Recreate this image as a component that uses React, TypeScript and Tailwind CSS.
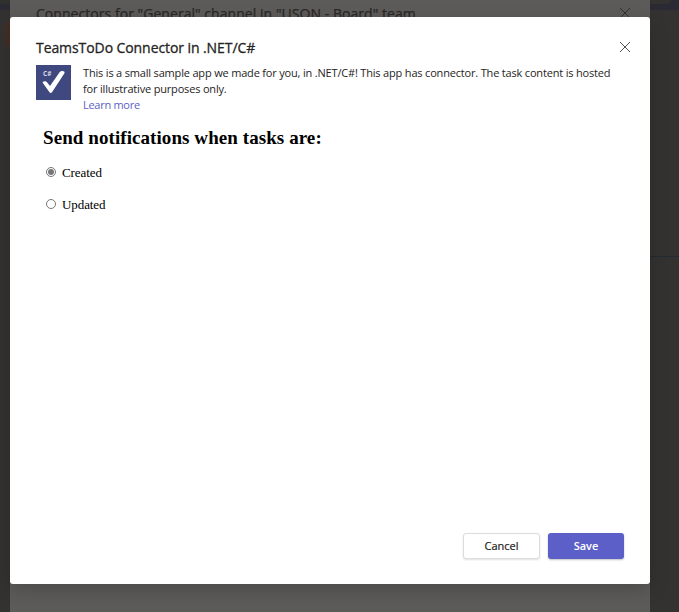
import { useState } from "react";

function CloseIcon({ className }: { className: string }) {
  return (
    <svg viewBox="0 0 12 12" className={className} fill="none" stroke="currentColor" strokeWidth="1">
      <path d="M1 1 11 11M11 1 1 11" />
    </svg>
  );
}

function AppLogo() {
  return (
    <svg viewBox="0 0 35 35" className="size-[35px] shrink-0">
      <rect width="35" height="35" fill="#40497f" />
      <text x="7" y="11" fill="#d5d8ea" fontSize="6.5" fontWeight="700" fontFamily="Open Sans, sans-serif">C#</text>
      <path d="M6.500 17.600c1.100-1.400 3.400-1.700 4.500-.4l3 3.900L23.600 7.300c1.100-1.500 3.200-1.800 4.500-.8.700.6.600 1.500 0 2.300L16 27.300c-.7 1-1.900 1-2.500 0z" fill="#fff" />
    </svg>
  );
}

function Option({ label, checked, onSelect }: { label: string; checked: boolean; onSelect: () => void }) {
  return (
    <label className="flex h-8 items-center font-['Liberation_Serif',serif] text-[13px] tracking-[-0.08px] text-black">
      <input type="radio" name="event" className="sr-only" checked={checked} onChange={onSelect} />
      <span className="-mt-0.5 mr-1.5 flex size-[10px] items-center justify-center rounded-full border border-[#767676]">
        {checked && <span className="size-[6px] rounded-full bg-[#767676]" />}
      </span>
      <span className="-mt-px">{label}</span>
    </label>
  );
}

function Backdrop() {
  return (
    <div className="flex h-full w-full">
      <div className="flex w-[10px] flex-col bg-[#333230]">
        <div className="h-1 bg-[#30302f]" />
        <div className="h-[6px] bg-[#292a33]" />
        <div className="mt-3 ml-[5px] h-[25px] rounded-l bg-[#442e25]" />
      </div>
      <div className="flex w-[640px] items-start justify-between bg-[#5d5b59] pt-1 pr-[19px] pl-[26px]">
        <div className="font-['Open_Sans',sans-serif] text-[14px] leading-5 tracking-[0.045px] whitespace-nowrap text-[#292827] [-webkit-text-stroke:0.25px]">
          Connectors for "General" channel in "USON - Board" team
        </div>
        <CloseIcon className="mt-[3px] size-3 text-[#30302f]" />
      </div>
      <div className="flex w-[29px] flex-col bg-[#333230]">
        <div className="h-[10px] bg-[#292a33]">
          <div className="h-1 w-[21px] rounded-br-sm bg-[#333230]" />
        </div>
        <div className="mt-[246px] h-px bg-[#222b33]" />
      </div>
    </div>
  );
}

export default function App() {
  const [event, setEvent] = useState("Created");
  return (
    <div className="relative h-[612px] w-[679px] overflow-hidden">
      <Backdrop />
      <div className="absolute top-[17px] left-[10px] flex h-[567px] w-[640px] flex-col rounded-[3px] bg-white px-[26px] pt-[21px] pb-[25px] font-['Open_Sans',sans-serif] text-[#252423] shadow-[0_6px_18px_rgba(0,0,0,0.18)]">
        <header className="flex h-5 items-center justify-between">
          <h1 className="text-[14px] leading-5 tracking-[-0.08px] [-webkit-text-stroke:0.3px]">TeamsToDo Connector in .NET/C#</h1>
          <button aria-label="Close" className="-mt-0.5 -mr-[7px]">
            <CloseIcon className="size-3 text-[#52504e]" />
          </button>
        </header>
        <section className="mt-[7px] flex gap-[12px]">
          <AppLogo />
          <div className="text-[11px] leading-4 tracking-[-0.18px] whitespace-nowrap">
            <p>This is a small sample app we made for you, in .NET/C#! This app has connector. The task content is hosted</p>
            <p>for illustrative purposes only.</p>
            <a className="block tracking-[-0.28px] text-[#5b5fc7]">Learn more</a>
          </div>
        </section>
        <main className="flex-1 pt-[14px] pl-[6px]">
          <h2 className="pl-px font-['Liberation_Serif',serif] text-[19px] leading-[22px] font-bold tracking-[0.075px] text-black">Send notifications when tasks are:</h2>
          <div className="pt-2 pl-1">
            <Option label="Created" checked={event === "Created"} onSelect={() => setEvent("Created")} />
            <Option label="Updated" checked={event === "Updated"} onSelect={() => setEvent("Updated")} />
          </div>
        </main>
        <footer className="flex justify-end gap-2 text-[11px]">
          <button className="h-[26px] w-[77px] rounded-[3px] border border-[#dddcdb] bg-white shadow-[0_1px_2px_rgba(0,0,0,0.12)] [-webkit-text-stroke:0.2px]">Cancel</button>
          <button className="h-[26px] w-[76px] rounded-[3px] bg-[#5b5fc7] font-semibold text-white shadow-[0_1px_2px_rgba(0,0,0,0.25)]">Save</button>
        </footer>
      </div>
    </div>
  );
}
